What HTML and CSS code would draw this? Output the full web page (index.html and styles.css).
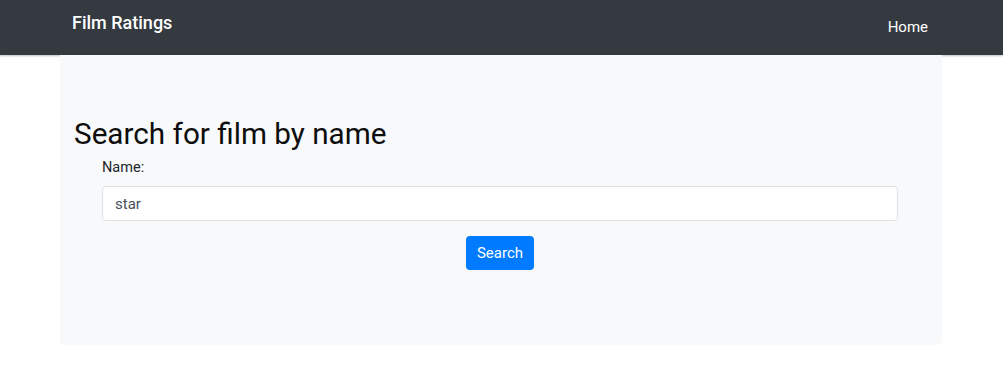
FILE: index.html
```html
<!DOCTYPE html>
<html lang="en">
<head>
    <meta charset="UTF-8">
    <meta name="viewport" content="width=device-width, initial-scale=1.0">
    <title>Film Ratings</title>
    <link rel="stylesheet" href="styles.css">
</head>
<body>
    <nav class="navbar">
        <div class="nav-inner">
            <a class="brand" href="#">Film Ratings</a>
            <a class="nav-link" href="#">Home</a>
        </div>
    </nav>

    <div class="jumbotron">
        <h1>Search for film by name</h1>
        <form class="search-form" onsubmit="return false;">
            <label for="name">Name:</label>
            <input type="text" id="name" value="star">
            <div class="actions">
                <button type="submit">Search</button>
            </div>
        </form>
    </div>
</body>
</html>
```

FILE: styles.css
```css
body {
    margin: 0;
    font-family: Roboto, "Liberation Sans", Arial, sans-serif;
    background: #fff;
    color: #212529;
}
.navbar {
    height: 55px;
    background-color: #343a40;
    box-shadow: 0 1px 2px rgba(0, 0, 0, 0.25);
}
.nav-inner {
    width: 882px;
    margin: 0 61px 0 60px;
    box-sizing: border-box;
    padding: 0 14px 0 12px;
    display: flex;
    justify-content: space-between;
    align-items: flex-start;
}
.brand {
    margin-top: 12px;
    font-size: 18px;
    line-height: 21px;
    font-weight: 500;
    color: #fff;
    text-decoration: none;
}
.nav-link {
    margin-top: 17px;
    font-size: 15px;
    line-height: 20px;
    color: #fff;
    text-decoration: none;
}
.jumbotron {
    width: 882px;
    height: 290px;
    margin: 0 61px 0 60px;
    box-sizing: border-box;
    padding: 61px 14px 0;
    background-color: #f8f9fa;
    border-radius: 0 0 5px 5px;
}
h1 {
    margin: 0;
    font-size: 29.7px;
    line-height: 36px;
    font-weight: 400;
    color: #0d0d0d;
}
.search-form {
    margin: 6px 30px 0 28px;
    display: flex;
    flex-direction: column;
}
label {
    font-size: 14.5px;
    line-height: 20px;
}
input {
    margin-top: 8px;
    height: 35px;
    box-sizing: border-box;
    padding: 0 12px;
    border: 1px solid #dfe2e5;
    border-radius: 4px;
    font-family: inherit;
    font-size: 15px;
    color: #495057;
    background: #fff;
}
.actions {
    margin-top: 15px;
    display: flex;
    justify-content: center;
}
button {
    width: 68px;
    height: 34px;
    border: none;
    border-radius: 4px;
    background-color: #007bff;
    color: #fff;
    font-family: inherit;
    font-size: 15px;
    cursor: pointer;
}
```
